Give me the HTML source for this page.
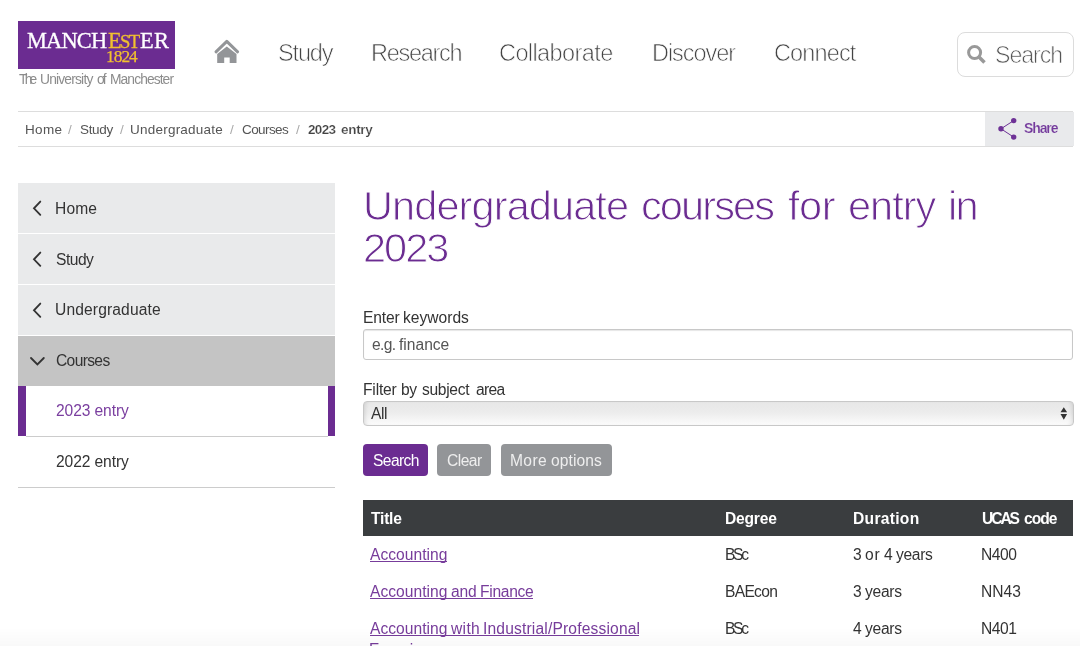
<!DOCTYPE html>
<html><head><meta charset="utf-8"><title>Undergraduate courses for entry in 2023</title>
<style>
html,body{margin:0;padding:0}
body{width:1080px;height:646px;overflow:hidden;background:#fff;font-family:"Liberation Sans",sans-serif;position:relative}
.t{position:absolute;white-space:nowrap;will-change:transform}
.b{position:absolute;box-sizing:border-box}
svg{position:absolute}
</style></head><body>
<!-- logo -->
<div class="b" style="left:18.4px;top:21px;width:156.6px;height:48.2px;background:#6b2c91"></div>
<!-- home icon -->
<svg style="left:210px;top:36px" width="34" height="30" viewBox="210 36 34 30">
<path d="M216 51.8 L226.8 41.4 L237.6 51.8" stroke="#939598" stroke-width="3" fill="none" stroke-linecap="round" stroke-linejoin="round"/>
<path d="M217.2 63 V54 L226.8 46.4 L236.5 54 V63 H229.7 V57.6 H224.2 V63 Z" fill="#939598"/>
</svg>
<!-- search box -->
<div class="b" style="left:957px;top:32px;width:116.5px;height:44.5px;border:1px solid #dcdcdc;border-radius:8px"></div>
<svg style="left:960px;top:40px" width="30" height="28" viewBox="960 40 30 28">
<circle cx="974.6" cy="52.5" r="6" stroke="#999" stroke-width="3" fill="none"/>
<path d="M979 57 L984.5 62.5" stroke="#999" stroke-width="3.6"/>
</svg>
<!-- breadcrumb -->
<div class="b" style="left:18.4px;top:111px;width:1055px;height:1px;background:#ddd"></div>
<div class="b" style="left:18.4px;top:146px;width:1055px;height:1px;background:#ddd"></div>
<div class="b" style="left:985px;top:112px;width:88.5px;height:34px;background:#e9eaec"></div>
<svg style="left:995px;top:115px" width="24" height="28" viewBox="995 115 24 28">
<path d="M1013.7 120.6 L1001 128.8 L1013.7 137.1" stroke="#6e3296" stroke-width="1" fill="none"/>
<circle cx="1001" cy="128.8" r="2.7" fill="#6e3296"/>
<circle cx="1013.7" cy="120.6" r="2.7" fill="#6e3296"/>
<circle cx="1013.7" cy="137.1" r="2.7" fill="#6e3296"/>
</svg>
<!-- left nav -->
<div class="b" style="left:18.4px;top:183px;width:316.5px;height:50px;background:#e9eaeb"></div>
<div class="b" style="left:18.4px;top:234px;width:316.5px;height:50px;background:#e9eaeb"></div>
<div class="b" style="left:18.4px;top:285px;width:316.5px;height:50px;background:#e9eaeb"></div>
<div class="b" style="left:18.4px;top:336px;width:316.5px;height:50px;background:#c4c4c4"></div>
<div class="b" style="left:18.4px;top:386px;width:7.4px;height:50px;background:#6b2c91"></div>
<div class="b" style="left:327.7px;top:386px;width:7.2px;height:50px;background:#6b2c91"></div>
<div class="b" style="left:25.8px;top:435.5px;width:302px;height:1px;background:#ccc"></div>
<div class="b" style="left:18.4px;top:487px;width:316.5px;height:1px;background:#ccc"></div>
<svg style="left:18px;top:183px" width="40" height="200" viewBox="18 183 40 200">
<path d="M40.3 201.6 L34 208.3 L40.3 214.8" stroke="#333" stroke-width="1.85" fill="none" stroke-linecap="round"/>
<path d="M40.3 252.6 L34 259.3 L40.3 265.8" stroke="#333" stroke-width="1.85" fill="none" stroke-linecap="round"/>
<path d="M40.3 303.6 L34 310.3 L40.3 316.8" stroke="#333" stroke-width="1.85" fill="none" stroke-linecap="round"/>
<path d="M31 358 L37.4 364.5 L43.8 358" stroke="#333" stroke-width="1.85" fill="none" stroke-linecap="round"/>
</svg>
<!-- form -->
<div class="b" style="left:363.3px;top:329px;width:710px;height:30.5px;border:1px solid #c8c8c8;border-radius:3px;box-shadow:inset 0 1px 1px rgba(0,0,0,.1)"></div>
<div class="b" style="left:363px;top:401px;width:710.5px;height:24.6px;border:1px solid #c8c8c8;border-radius:4px;background:linear-gradient(#e7e7e7,#ececec 45%,#f6f6f6 80%,#fbfbfb);box-shadow:inset 4px 0 4px -3px rgba(0,0,0,.12),inset -4px 0 4px -3px rgba(0,0,0,.12)"></div>
<svg style="left:1058px;top:405px" width="12" height="18" viewBox="1058 405 12 18">
<path d="M1060.5 412.2 L1063.8 407.2 L1067.1 412.2 Z M1060.5 414 L1063.8 419.7 L1067.1 414 Z" fill="#333"/>
</svg>
<div class="b" style="left:363px;top:444px;width:65px;height:31.6px;border-radius:4px;background:#6b2c91"></div>
<div class="b" style="left:437.2px;top:444px;width:54px;height:31.6px;border-radius:4px;background:#939598"></div>
<div class="b" style="left:501px;top:444px;width:110.6px;height:31.6px;border-radius:4px;background:#939598"></div>
<!-- table -->
<div class="b" style="left:363px;top:500px;width:710.2px;height:35.5px;background:#3a3d3f"></div>
<div class="b" style="left:370.00px;top:561.10px;width:76.70px;height:1px;background:#773c9b"></div>
<div class="b" style="left:370.00px;top:598.30px;width:163.30px;height:1px;background:#773c9b"></div>
<div class="b" style="left:370.00px;top:635.10px;width:269.20px;height:1px;background:#773c9b"></div>
<div class="b" style="left:370.00px;top:656.40px;width:76.00px;height:1px;background:#773c9b"></div>
<div class="t" style="left:27.00px;top:29.54px;font-size:22.4px;line-height:22.4px;color:#fff;letter-spacing:-0.821px;font-family:'Liberation Serif',serif;-webkit-text-stroke:0.3px #fff;">MANCH</div>
<div class="t" style="left:107.70px;top:29.54px;font-size:22.4px;line-height:22.4px;color:#f2c12e;font-family:'Liberation Serif',serif;-webkit-text-stroke:0.3px #f2c12e;">E</div>
<div class="t" style="left:119.70px;top:32.72px;font-size:18.6px;line-height:18.6px;color:#f2c12e;letter-spacing:-1.641px;font-family:'Liberation Serif',serif;-webkit-text-stroke:0.3px #f2c12e;">ST</div>
<div class="t" style="left:139.60px;top:29.54px;font-size:22.4px;line-height:22.4px;color:#fff;letter-spacing:0.423px;font-family:'Liberation Serif',serif;-webkit-text-stroke:0.3px #fff;">ER</div>
<div class="t" style="left:106.30px;top:48.03px;font-size:17.4px;line-height:17.4px;color:#f2c12e;letter-spacing:-0.995px;font-family:'Liberation Serif',serif;-webkit-text-stroke:0.25px #f2c12e;">1824</div>
<div class="t" style="left:19.40px;top:72.52px;font-size:13.8px;line-height:13.8px;color:#8c8c8c;letter-spacing:-2.750px;">The</div>
<div class="t" style="left:40.10px;top:72.52px;font-size:13.8px;line-height:13.8px;color:#8c8c8c;letter-spacing:-0.807px;">University</div>
<div class="t" style="left:97.20px;top:72.52px;font-size:13.8px;line-height:13.8px;color:#8c8c8c;letter-spacing:-1.873px;">of</div>
<div class="t" style="left:109.70px;top:72.52px;font-size:13.8px;line-height:13.8px;color:#8c8c8c;letter-spacing:-0.899px;">Manchester</div>
<div class="t" style="left:277.60px;top:42.01px;font-size:23.5px;line-height:23.5px;color:#444;letter-spacing:-1.161px;-webkit-text-stroke:0.7px #fff;">Study</div>
<div class="t" style="left:371.00px;top:42.01px;font-size:23.5px;line-height:23.5px;color:#444;letter-spacing:-1.272px;-webkit-text-stroke:0.7px #fff;">Research</div>
<div class="t" style="left:499.30px;top:42.01px;font-size:23.5px;line-height:23.5px;color:#444;letter-spacing:-0.592px;-webkit-text-stroke:0.7px #fff;">Collaborate</div>
<div class="t" style="left:651.90px;top:42.01px;font-size:23.5px;line-height:23.5px;color:#444;letter-spacing:-1.040px;-webkit-text-stroke:0.7px #fff;">Discover</div>
<div class="t" style="left:773.90px;top:42.01px;font-size:23.5px;line-height:23.5px;color:#444;letter-spacing:-0.867px;-webkit-text-stroke:0.7px #fff;">Connect</div>
<div class="t" style="left:994.60px;top:43.66px;font-size:23.2px;line-height:23.2px;color:#555;letter-spacing:-1.055px;-webkit-text-stroke:0.7px #fff;">Search</div>
<div class="t" style="left:24.50px;top:122.87px;font-size:13.5px;line-height:13.5px;color:#555;letter-spacing:0.332px;">Home</div>
<div class="t" style="left:68.00px;top:122.87px;font-size:13.5px;line-height:13.5px;color:#aaa;">/</div>
<div class="t" style="left:79.50px;top:122.87px;font-size:13.5px;line-height:13.5px;color:#555;letter-spacing:-0.343px;">Study</div>
<div class="t" style="left:120.00px;top:122.87px;font-size:13.5px;line-height:13.5px;color:#aaa;">/</div>
<div class="t" style="left:130.25px;top:122.87px;font-size:13.5px;line-height:13.5px;color:#555;letter-spacing:0.225px;">Undergraduate</div>
<div class="t" style="left:230.00px;top:122.87px;font-size:13.5px;line-height:13.5px;color:#aaa;">/</div>
<div class="t" style="left:241.75px;top:122.87px;font-size:13.5px;line-height:13.5px;color:#555;letter-spacing:-0.587px;">Courses</div>
<div class="t" style="left:296.00px;top:122.87px;font-size:13.5px;line-height:13.5px;color:#aaa;">/</div>
<div class="t" style="left:307.80px;top:122.87px;font-size:13.5px;line-height:13.5px;color:#444;font-weight:700;letter-spacing:-0.675px;-webkit-text-stroke:0.2px #fff;">2023</div>
<div class="t" style="left:340.70px;top:122.87px;font-size:13.5px;line-height:13.5px;color:#444;font-weight:700;letter-spacing:-0.301px;-webkit-text-stroke:0.2px #fff;">entry</div>
<div class="t" style="left:1024.40px;top:121.15px;font-size:14px;line-height:14px;color:#743a9c;font-weight:700;letter-spacing:-1.106px;-webkit-text-stroke:0.15px #e9eaec;">Share</div>
<div class="t" style="left:55.10px;top:200.79px;font-size:15.6px;line-height:15.6px;color:#333;letter-spacing:0.125px;">Home</div>
<div class="t" style="left:56.00px;top:251.59px;font-size:15.6px;line-height:15.6px;color:#333;letter-spacing:-0.495px;">Study</div>
<div class="t" style="left:55.20px;top:302.39px;font-size:15.6px;line-height:15.6px;color:#333;letter-spacing:0.137px;">Undergraduate</div>
<div class="t" style="left:56.00px;top:353.29px;font-size:15.6px;line-height:15.6px;color:#333;letter-spacing:-0.645px;">Courses</div>
<div class="t" style="left:56.00px;top:403.19px;font-size:15.6px;line-height:15.6px;color:#7a3e9f;letter-spacing:-0.099px;">2023 entry</div>
<div class="t" style="left:56.00px;top:453.79px;font-size:15.6px;line-height:15.6px;color:#333;letter-spacing:-0.099px;">2022 entry</div>
<div class="t" style="left:362.80px;top:184.57px;font-size:41.5px;line-height:41.5px;color:#6b2c91;letter-spacing:-0.899px;-webkit-text-stroke:1.0px #fff;">Undergraduate</div>
<div class="t" style="left:641.20px;top:184.57px;font-size:41.5px;line-height:41.5px;color:#6b2c91;letter-spacing:-1.893px;-webkit-text-stroke:1.0px #fff;">courses</div>
<div class="t" style="left:787.70px;top:184.57px;font-size:41.5px;line-height:41.5px;color:#6b2c91;letter-spacing:-0.455px;-webkit-text-stroke:1.0px #fff;">for</div>
<div class="t" style="left:848.30px;top:184.57px;font-size:41.5px;line-height:41.5px;color:#6b2c91;letter-spacing:-0.978px;-webkit-text-stroke:1.0px #fff;">entry</div>
<div class="t" style="left:948.10px;top:184.57px;font-size:41.5px;line-height:41.5px;color:#6b2c91;letter-spacing:-1.720px;-webkit-text-stroke:1.0px #fff;">in</div>
<div class="t" style="left:363.00px;top:226.57px;font-size:41.5px;line-height:41.5px;color:#6b2c91;letter-spacing:-1.980px;-webkit-text-stroke:1.0px #fff;">2023</div>
<div class="t" style="left:362.70px;top:309.79px;font-size:15.6px;line-height:15.6px;color:#333;letter-spacing:-0.120px;">Enter</div>
<div class="t" style="left:403.10px;top:309.79px;font-size:15.6px;line-height:15.6px;color:#333;">keywords</div>
<div class="t" style="left:371.60px;top:337.19px;font-size:15.6px;line-height:15.6px;color:#555;letter-spacing:-0.626px;">e.g.</div>
<div class="t" style="left:399.30px;top:337.19px;font-size:15.6px;line-height:15.6px;color:#555;">finance</div>
<div class="t" style="left:362.70px;top:381.89px;font-size:15.6px;line-height:15.6px;color:#333;letter-spacing:-0.172px;">Filter</div>
<div class="t" style="left:400.80px;top:381.89px;font-size:15.6px;line-height:15.6px;color:#333;letter-spacing:-0.473px;">by</div>
<div class="t" style="left:422.20px;top:381.89px;font-size:15.6px;line-height:15.6px;color:#333;letter-spacing:-0.313px;">subject</div>
<div class="t" style="left:475.60px;top:381.89px;font-size:15.6px;line-height:15.6px;color:#333;letter-spacing:-0.646px;">area</div>
<div class="t" style="left:371.20px;top:405.79px;font-size:15.6px;line-height:15.6px;color:#333;letter-spacing:-0.383px;">All</div>
<div class="t" style="left:372.50px;top:453.09px;font-size:15.6px;line-height:15.6px;color:#fff;letter-spacing:-0.587px;">Search</div>
<div class="t" style="left:446.90px;top:453.09px;font-size:15.6px;line-height:15.6px;color:#eee;letter-spacing:-0.543px;">Clear</div>
<div class="t" style="left:509.60px;top:453.09px;font-size:15.6px;line-height:15.6px;color:#eee;letter-spacing:0.382px;">More</div>
<div class="t" style="left:550.90px;top:453.09px;font-size:15.6px;line-height:15.6px;color:#eee;letter-spacing:0.102px;">options</div>
<div class="t" style="left:370.80px;top:510.59px;font-size:15.6px;line-height:15.6px;color:#fff;font-weight:700;letter-spacing:-0.225px;">Title</div>
<div class="t" style="left:724.80px;top:510.79px;font-size:15.6px;line-height:15.6px;color:#fff;font-weight:700;letter-spacing:-0.200px;">Degree</div>
<div class="t" style="left:852.60px;top:510.79px;font-size:15.6px;line-height:15.6px;color:#fff;font-weight:700;letter-spacing:0.303px;">Duration</div>
<div class="t" style="left:981.70px;top:510.79px;font-size:15.6px;line-height:15.6px;color:#fff;font-weight:700;letter-spacing:-2.061px;">UCAS</div>
<div class="t" style="left:1024.10px;top:510.79px;font-size:15.6px;line-height:15.6px;color:#fff;font-weight:700;letter-spacing:-0.974px;">code</div>
<div class="t" style="left:370.00px;top:546.99px;font-size:15.6px;line-height:15.6px;color:#773c9b;letter-spacing:0.024px;">Accounting</div>
<div class="t" style="left:370.00px;top:584.19px;font-size:15.6px;line-height:15.6px;color:#773c9b;letter-spacing:0.024px;">Accounting</div>
<div class="t" style="left:450.80px;top:584.19px;font-size:15.6px;line-height:15.6px;color:#773c9b;letter-spacing:-0.173px;">and</div>
<div class="t" style="left:480.20px;top:584.19px;font-size:15.6px;line-height:15.6px;color:#773c9b;letter-spacing:-0.284px;">Finance</div>
<div class="t" style="left:370.00px;top:620.99px;font-size:15.6px;line-height:15.6px;color:#773c9b;letter-spacing:0.024px;">Accounting</div>
<div class="t" style="left:451.30px;top:620.99px;font-size:15.6px;line-height:15.6px;color:#773c9b;letter-spacing:0.347px;">with</div>
<div class="t" style="left:482.60px;top:620.99px;font-size:15.6px;line-height:15.6px;color:#773c9b;letter-spacing:0.166px;">Industrial/Professional</div>
<div class="t" style="left:369.00px;top:642.29px;font-size:15.6px;line-height:15.6px;color:#773c9b;">Experience</div>
<div class="t" style="left:725.30px;top:546.99px;font-size:15.6px;line-height:15.6px;color:#333;letter-spacing:-2.301px;">BSc</div>
<div class="t" style="left:853.10px;top:546.99px;font-size:15.6px;line-height:15.6px;color:#333;">3</div>
<div class="t" style="left:865.40px;top:546.99px;font-size:15.6px;line-height:15.6px;color:#333;letter-spacing:0.927px;">or</div>
<div class="t" style="left:883.70px;top:546.99px;font-size:15.6px;line-height:15.6px;color:#333;">4</div>
<div class="t" style="left:895.90px;top:546.99px;font-size:15.6px;line-height:15.6px;color:#333;letter-spacing:-0.309px;">years</div>
<div class="t" style="left:980.50px;top:546.99px;font-size:15.6px;line-height:15.6px;color:#333;letter-spacing:-0.469px;">N400</div>
<div class="t" style="left:724.50px;top:584.19px;font-size:15.6px;line-height:15.6px;color:#333;letter-spacing:-0.694px;">BAEcon</div>
<div class="t" style="left:853.10px;top:584.19px;font-size:15.6px;line-height:15.6px;color:#333;">3</div>
<div class="t" style="left:864.80px;top:584.19px;font-size:15.6px;line-height:15.6px;color:#333;letter-spacing:-0.284px;">years</div>
<div class="t" style="left:980.50px;top:584.19px;font-size:15.6px;line-height:15.6px;color:#333;letter-spacing:0.035px;">NN43</div>
<div class="t" style="left:725.30px;top:620.99px;font-size:15.6px;line-height:15.6px;color:#333;letter-spacing:-2.301px;">BSc</div>
<div class="t" style="left:853.10px;top:620.99px;font-size:15.6px;line-height:15.6px;color:#333;">4</div>
<div class="t" style="left:864.80px;top:620.99px;font-size:15.6px;line-height:15.6px;color:#333;letter-spacing:-0.284px;">years</div>
<div class="t" style="left:980.50px;top:620.99px;font-size:15.6px;line-height:15.6px;color:#333;letter-spacing:-0.469px;">N401</div>
<div class="b" style="left:0;top:627px;width:1080px;height:19px;background:linear-gradient(rgba(0,0,0,0),rgba(0,0,0,.025))"></div>
</body></html>
